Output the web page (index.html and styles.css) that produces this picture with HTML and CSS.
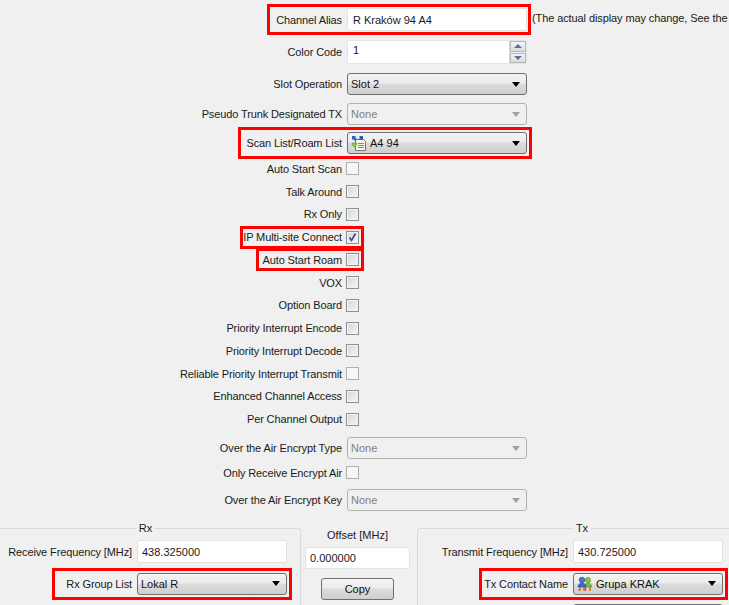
FILE: index.html
```html
<!DOCTYPE html>
<html lang="en">
<head>
    <meta charset="UTF-8">
    <title>Channel</title>
    <link rel="stylesheet" href="styles.css">
</head>
<body>
    <div class="rows">
        <div class="row">
            <div class="mark mark-alias">
                <label>Channel Alias</label>
                <input class="text ctl alias" type="text" value="R Kraków 94 A4">
            </div>
            <span class="hint">(The actual display may change, See the</span>
        </div>
        <div class="row">
            <label>Color Code</label>
            <div class="spin ctl">
                <span class="spin-val">1</span>
                <div class="spin-btns">
                    <span class="spin-btn"><i class="up"></i></span>
                    <span class="spin-btn"><i class="down"></i></span>
                </div>
            </div>
        </div>
        <div class="row">
            <label>Slot Operation</label>
            <div class="drop ctl"><span>Slot 2</span><i class="arrow"></i></div>
        </div>
        <div class="row near">
            <label>Pseudo Trunk Designated TX</label>
            <div class="drop off ctl"><span>None</span><i class="arrow"></i></div>
        </div>
        <div class="row closer">
            <div class="mark mark-scan">
                <label>Scan List/Roam List</label>
                <div class="drop ctl">
                    <svg class="ico" width="16" height="16" viewBox="0 0 16 16">
                        <path d="M4.500 4.500h8l2 2v9h-10z" fill="#f6f4e8" stroke="#77776a"/>
                        <path d="M7 8.500h6M7 10.500h6M7 12.500h6" stroke="#8a8a7c"/>
                        <path d="M1 1h4l-1 1 2 2-2 2-2-2-1 1z" fill="#3a62b8"/>
                        <path d="M8 1h4v4l-1-1-1 1-2-1 1-2z" fill="#2d58b0"/>
                        <path d="M1 8h5v1l-2 3-3-2z" fill="#8cc63f" stroke="#5d8f22" stroke-width=".5"/>
                    </svg>
                    <span>A4 94</span><i class="arrow"></i>
                </div>
            </div>
        </div>
    </div>

    <div class="row-check first">
        <label>Auto Start Scan</label><input class="check off" type="checkbox" disabled>
    </div>
    <div class="checks">
        <div class="row-check"><label>Talk Around</label><input class="check" type="checkbox"></div>
        <div class="row-check"><label>Rx Only</label><input class="check" type="checkbox"></div>
        <div class="row-check">
            <div class="mark mark-check mark-ip">
                <label>IP Multi-site Connect</label>
                <span class="check tick">
                    <svg width="11" height="11" viewBox="0 0 11 11"><path d="M2.500 5.500l2 3 4-7" fill="none" stroke="#3c4f9c" stroke-width="1.700"/></svg>
                </span>
            </div>
        </div>
        <div class="row-check">
            <div class="mark mark-check">
                <label>Auto Start Roam</label><input class="check" type="checkbox">
            </div>
        </div>
        <div class="row-check"><label>VOX</label><input class="check" type="checkbox"></div>
        <div class="row-check"><label>Option Board</label><input class="check" type="checkbox"></div>
        <div class="row-check"><label>Priority Interrupt Encode</label><input class="check" type="checkbox"></div>
        <div class="row-check"><label>Priority Interrupt Decode</label><input class="check" type="checkbox"></div>
        <div class="row-check"><label>Reliable Priority Interrupt Transmit</label><input class="check off" type="checkbox" disabled></div>
        <div class="row-check"><label>Enhanced Channel Access</label><input class="check" type="checkbox"></div>
        <div class="row-check"><label>Per Channel Output</label><input class="check" type="checkbox"></div>
    </div>

    <div class="row encrypt">
        <label>Over the Air Encrypt Type</label>
        <div class="drop off ctl"><span>None</span><i class="arrow"></i></div>
    </div>
    <div class="row-check encrypt-only">
        <label>Only Receive Encrypt Air</label><input class="check off" type="checkbox" disabled>
    </div>
    <div class="row encrypt-key">
        <label>Over the Air Encrypt Key</label>
        <div class="drop off ctl"><span>None</span><i class="arrow"></i></div>
    </div>

    <div class="bottom">
        <fieldset class="group group-rx">
            <legend>Rx</legend>
            <div class="freq">
                <label>Receive Frequency [MHz]</label>
                <input class="text wide" type="text" value="438.325000">
            </div>
            <div class="freq list">
                <div class="mark mark-rx">
                    <label>Rx Group List</label>
                    <div class="drop wide"><span>Lokal R</span><i class="arrow"></i></div>
                </div>
            </div>
            <div class="freq below"><input class="check" type="checkbox"></div>
        </fieldset>

        <div class="offset">
            <div class="offset-title">Offset [MHz]</div>
            <input class="text offset-val" type="text" value="0.000000">
            <button class="copy">Copy</button>
        </div>

        <fieldset class="group group-tx">
            <legend>Tx</legend>
            <div class="freq">
                <label>Transmit Frequency [MHz]</label>
                <input class="text wide" type="text" value="430.725000">
            </div>
            <div class="freq list">
                <div class="mark mark-tx">
                    <label>Tx Contact Name</label>
                    <div class="drop wide">
                        <svg class="ico" width="16" height="16" viewBox="0 0 16 16">
                            <circle cx="11" cy="4" r="2.600" fill="#86c440" stroke="#4f8a1e" stroke-width=".6"/>
                            <path d="M7.500 11c0-3 1.500-4 3.500-4s3.500 1 3.500 4z" fill="#7dbb3a" stroke="#4f8a1e" stroke-width=".6"/>
                            <path d="M8.500 11v3h-1M13 11v3h1" fill="none" stroke="#e0601c" stroke-width="1.600"/>
                            <circle cx="5" cy="4" r="2.800" fill="#4a7ad0" stroke="#23479a" stroke-width=".6"/>
                            <path d="M1 11c0-3 2-4 4-4s4 1 4 4z" fill="#3f6cc4" stroke="#23479a" stroke-width=".6"/>
                            <path d="M3 11v3H1.500M7 11v3h1.500" fill="none" stroke="#e0601c" stroke-width="1.600"/>
                        </svg>
                        <span>Grupa KRAK</span><i class="arrow"></i>
                    </div>
                </div>
            </div>
            <div class="freq below"><div class="drop wide"><span></span><i class="arrow"></i></div></div>
        </fieldset>
    </div>
</body>
</html>
```

FILE: styles.css
```css
html, body {
    height: 605px;
    overflow: hidden;
}
body {
    margin: 0;
    background-color: #f0f0f0;
    color: #1a1a1a;
    font-family: "Liberation Sans", Arial, sans-serif;
    font-size: 11px;
}
label {
    white-space: nowrap;
    letter-spacing: -0.12px;
}

/* right-aligned form rows: label ends at 342, control starts at 347 */
.rows {
    display: flex;
    flex-direction: column;
    gap: 9px;
    width: 527px;
    padding-top: 8px;
}
.row, .row-check {
    display: flex;
    align-items: center;
    justify-content: flex-end;
    gap: 5px;
    width: 527px;
}
.row {
    position: relative;
}
.row-check {
    gap: 4px;
    width: 359px;
    height: 13px;
}
.near { margin-top: -1px; }
.closer { margin-top: -2px; }
.first { margin-top: 8px; }
.checks {
    display: flex;
    flex-direction: column;
    gap: 9.75px;
    margin-top: 10px;
}
.encrypt { margin-top: 11.5px; }
.encrypt-only { margin-top: 7px; }
.encrypt-key { margin-top: 10px; }

.ctl {
    width: 180px;
}
.hint {
    position: absolute;
    left: 532px;
    top: 4px;
    white-space: nowrap;
    letter-spacing: -0.1px;
}

/* red annotation boxes */
.mark {
    display: flex;
    align-items: center;
    gap: 5px;
    outline: 3px solid #f00;
}
.mark-alias { padding-left: 5px; outline-offset: 1px; }
.mark-scan { padding-left: 3px; outline-offset: 2px; }
.mark-check { gap: 4px; margin-right: -2px; padding: 0 2px 0 3px; height: 17px; outline-offset: 0; }
.mark-ip { padding-left: 0; }
.mark-rx { padding-left: 9px; outline-offset: 2px; }
.mark-tx { outline-offset: 2px; }

/* inputs */
.text {
    box-sizing: border-box;
    height: 23px;
    margin: 0;
    padding: 0 4px;
    border: 1px solid #e2e3e4;
    border-radius: 2px;
    background: #fff;
    color: #1a1a1a;
    font: inherit;
}
.alias { padding-left: 5px; }

.spin {
    box-sizing: border-box;
    display: flex;
    justify-content: space-between;
    height: 24px;
    border: 1px solid #e2e3e4;
    border-radius: 2px;
    background: #fff;
}
.spin-val {
    padding: 3px 0 0 5px;
}
.spin-btns {
    display: flex;
    flex-direction: column;
    gap: 1px;
    width: 16px;
    background: #f0f0f0;
    border-left: 1px solid #d5d5d5;
}
.spin-btn {
    flex: 1;
    display: flex;
    align-items: center;
    justify-content: center;
    background: linear-gradient(#f4f4f4, #dcdcdc);
    border: 1px solid #b8b8b8;
}
.up, .down {
    width: 0;
    height: 0;
    border-left: 4px solid transparent;
    border-right: 4px solid transparent;
}
.up { border-bottom: 4px solid #5a6ea8; }
.down { border-top: 4px solid #5a6ea8; }

/* dropdowns */
.drop {
    box-sizing: border-box;
    display: flex;
    align-items: center;
    height: 22px;
    padding: 0 6px 0 3px;
    border: 1px solid #707070;
    border-radius: 3px;
    background: linear-gradient(#f3f3f3 0, #ececec 45%, #dcdcdc 50%, #cfcfcf 100%);
    color: #111;
}
.drop span {
    flex: 1;
}
.drop .ico {
    margin: 0 3px 0 0;
}
.arrow {
    width: 0;
    height: 0;
    border-left: 4.500px solid transparent;
    border-right: 4.500px solid transparent;
    border-top: 5px solid #000;
}
.drop.off {
    border-color: #b2b2b2;
    background: #f0f0f0;
    color: #808080;
}
.drop.off .arrow {
    border-top-color: #a0a0a0;
}

/* checkboxes */
.check {
    appearance: none;
    box-sizing: border-box;
    flex: none;
    display: flex;
    align-items: center;
    justify-content: center;
    width: 13px;
    height: 13px;
    margin: 0;
    border: 1px solid #8e8f8f;
    background: linear-gradient(135deg, #d6d6d6, #f6f6f6);
    box-shadow: inset 0 0 0 1px #f4f4f4;
}
.check.off {
    border-color: #b0b0b0;
    background: #f6f6f6;
    box-shadow: none;
}

/* Rx / Offset / Tx, cut off by the bottom of the window */
.bottom {
    display: flex;
    align-items: flex-start;
    width: 729px;
    height: 83px;
    margin-top: 11px;
    overflow: hidden;
}
.group {
    box-sizing: border-box;
    height: 120px;
    margin: 0;
    padding: 5px 0 0;
    border: 1px solid #d8d9da;
    border-radius: 3px;
}
.group legend {
    padding: 0 3px;
    margin: 0 auto;
    line-height: 13px;
}
.group-rx {
    flex: none;
    width: 311px;
    margin-left: -10px;
}
.group-tx {
    flex: none;
    width: 330px;
    margin-left: 7px;
}
.freq {
    display: flex;
    align-items: center;
    justify-content: flex-end;
    gap: 5px;
    height: 23px;
}
.group-rx .freq { width: 296px; }
.group-tx .freq { width: 305px; }
.wide {
    width: 150px;
}
.list {
    margin-top: 9px;
}
.below {
    margin-top: 8px;
}
.group-rx .below {
    justify-content: flex-start;
    padding-left: 146px;
    box-sizing: border-box;
}
.offset {
    flex: none;
    display: flex;
    flex-direction: column;
    align-items: center;
    width: 105px;
    margin-left: 4px;
}
.offset-title {
    margin-top: 6px;
    line-height: 14px;
}
.offset-val {
    width: 105px;
    height: 22px;
    margin-top: 5px;
}
.copy {
    width: 73px;
    height: 22px;
    margin-top: 9px;
    padding: 0;
    border: 1px solid #707070;
    border-radius: 3px;
    background: linear-gradient(#f3f3f3 0, #ececec 45%, #dcdcdc 50%, #cfcfcf 100%);
    color: #111;
    font: inherit;
}
```
